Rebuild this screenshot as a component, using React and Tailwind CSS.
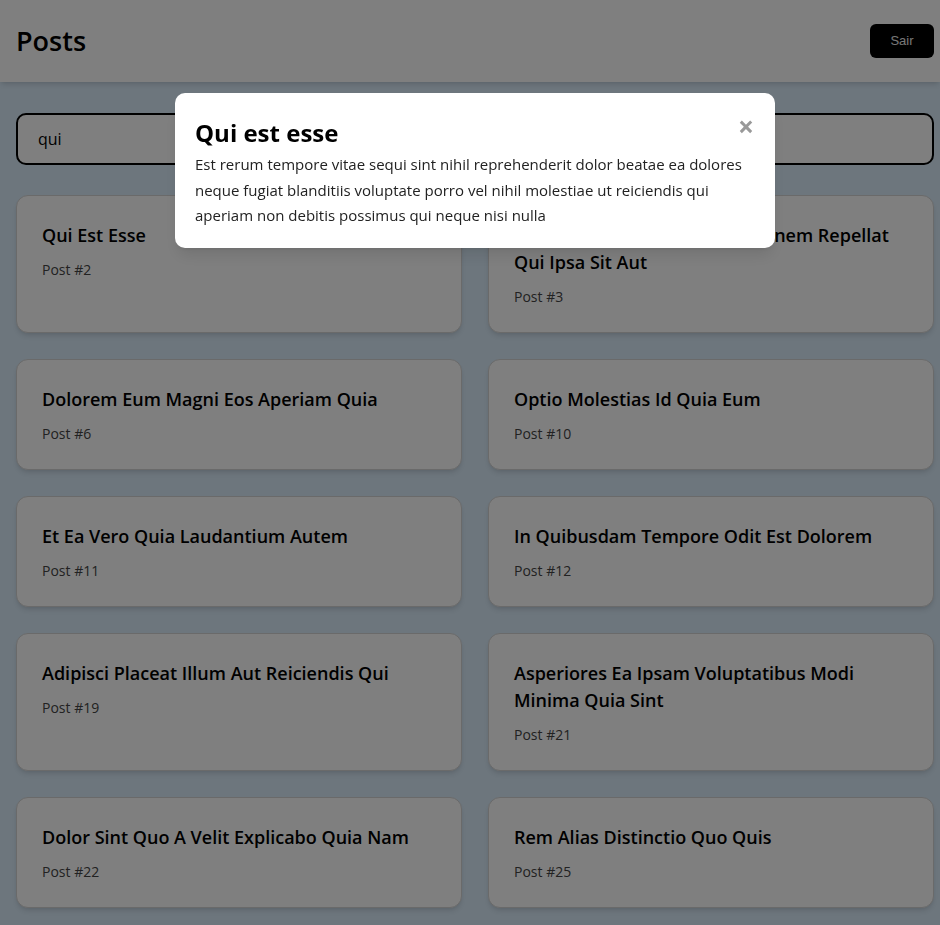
import React from 'react'

const posts = [
    { id: 2, title: 'Qui Est Esse' },
    { id: 3, title: 'Ea Molestias Quasi Exercitationem Repellat Qui Ipsa Sit Aut' },
    { id: 6, title: 'Dolorem Eum Magni Eos Aperiam Quia' },
    { id: 10, title: 'Optio Molestias Id Quia Eum' },
    { id: 11, title: 'Et Ea Vero Quia Laudantium Autem' },
    { id: 12, title: 'In Quibusdam Tempore Odit Est Dolorem' },
    { id: 19, title: 'Adipisci Placeat Illum Aut Reiciendis Qui' },
    { id: 21, title: 'Asperiores Ea Ipsam Voluptatibus Modi Minima Quia Sint' },
    { id: 22, title: 'Dolor Sint Quo A Velit Explicabo Quia Nam' },
    { id: 25, title: 'Rem Alias Distinctio Quo Quis' },
]

const font = { fontFamily: '"Segoe UI", "Open Sans", sans-serif' }

const App = () => {
    return (
        <div style={font} className='h-screen overflow-hidden bg-[#dbedfb] text-black'>
            <header className='h-[82px] bg-white shadow-md flex items-center justify-between pl-4 pr-[6px]'>
                <h1 className='text-[27px] font-semibold'>Posts</h1>
                <button className='w-16 h-[34px] rounded-md bg-black text-[#eee] text-[13px] font-["Liberation_Sans",sans-serif]'>
                    Sair
                </button>
            </header>

            <main className='pl-4 pr-[6px] pt-[31px] pb-6'>
                <input
                    type='text'
                    defaultValue='qui'
                    className='w-full h-[52px] border-2 border-black rounded-[10px] px-5 text-base bg-white outline-0'
                />

                <div className='grid grid-cols-2 gap-[26px] mt-[30px]'>
                    {posts.map(post => (
                        <div key={post.id} className='bg-white border border-[#d4d4d4] rounded-xl shadow-md px-[25px] pt-[26px] pb-[25px]'>
                            <h3 className='text-[18px] font-semibold leading-[27px]'>{post.title}</h3>
                            <p className='text-sm font-medium text-[#444] mt-[11px]'>Post #{post.id}</p>
                        </div>
                    ))}
                </div>
            </main>

            <div className='fixed inset-0 bg-black/50'>
                <div className='ml-[175px] mt-[93px] w-[600px] bg-white rounded-[10px] shadow-lg px-5 pt-5 pb-[19px] relative'>
                    <button className='absolute top-[19px] right-[21px] text-[#999] text-[28px] font-bold leading-none'>×</button>
                    <h2 className='text-2xl font-bold leading-[32px] mt-[4px]'>Qui est esse</h2>
                    <p className='text-[15px] leading-[25.6px] text-[#222] mt-[3px]'>
                        Est rerum tempore vitae sequi sint nihil reprehenderit dolor beatae ea dolores neque fugiat blanditiis voluptate porro vel nihil molestiae ut reiciendis qui aperiam non debitis possimus qui neque nisi nulla
                    </p>
                </div>
            </div>
        </div>
    )
}

export default App
